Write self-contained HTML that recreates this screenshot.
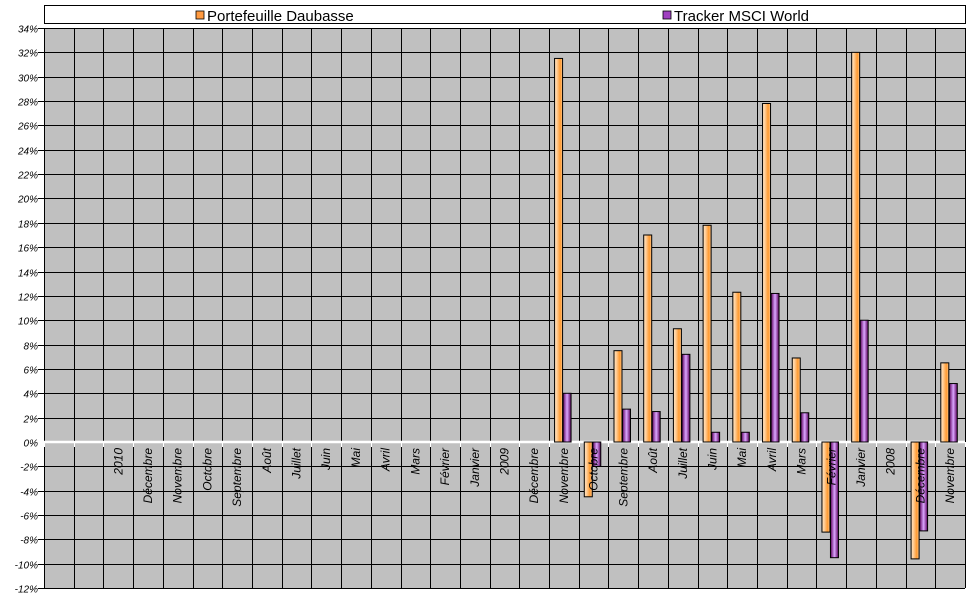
<!DOCTYPE html>
<html><head><meta charset="utf-8"><style>
html,body{margin:0;padding:0;background:#fff;}
svg{display:block;font-family:"Liberation Sans",sans-serif;}
</style></head><body>
<svg id="s" width="970" height="603" xmlns="http://www.w3.org/2000/svg">
<defs>
<linearGradient id="go" x1="0" x2="1" y1="0" y2="0">
<stop offset="0" stop-color="#ffe0bb"/><stop offset="0.25" stop-color="#ffd3a3"/><stop offset="0.7" stop-color="#ff9a30"/><stop offset="1" stop-color="#ffc890"/></linearGradient>
<linearGradient id="gp" x1="0" x2="1" y1="0" y2="0">
<stop offset="0" stop-color="#5a005a"/><stop offset="0.5" stop-color="#dba6ff"/><stop offset="1" stop-color="#5a005a"/></linearGradient>
</defs>
<rect x="44" y="28" width="921" height="560" fill="#c0c0c0"/>
<g id="grid" stroke="#000" stroke-width="1"></g>
<g id="bars"></g>
<g id="lab" font-size="11" font-style="italic" fill="#000"></g>
<rect x="44.5" y="5.5" width="921" height="18" fill="#fff" stroke="#000"/>
<rect x="196" y="11" width="8" height="8" fill="#ff9a40" stroke="#000" stroke-width="0.8"/>
<text x="207" y="21" font-size="15">Portefeuille Daubasse</text>
<rect x="663" y="11" width="8" height="8" fill="#a040c0" stroke="#000" stroke-width="0.8"/>
<text x="674" y="21" font-size="15">Tracker MSCI World</text>
</svg>
<script>
var NS="http://www.w3.org/2000/svg";
function el(p,t,a,txt){var e=document.createElementNS(NS,t);for(var k in a)e.setAttribute(k,a[k]);if(txt!==undefined)e.textContent=txt;document.getElementById(p).appendChild(e);return e;}
var ptop=28,step=24.353,x0=44,cw=29.71,zero=28+17*step;
for(var i=0;i<=23;i++){var y=Math.round(ptop+i*step)+0.5;
 if(i!=17)el("grid","line",{x1:38,x2:965,y1:y,y2:y});
 var v=34-2*i; el("lab","text",{x:38,y:y+4,"text-anchor":"end","font-size":"10"},v+"%");}
for(var j=0;j<=31;j++){var x=Math.round(x0+j*cw)+0.5;el("grid","line",{x1:x,x2:x,y1:28,y2:588});}
var names=["","","2010","Décembre","Novembre","Octobre","Septembre","Août","Juillet","Juin","Mai","Avril","Mars","Février","Janvier","2009","Décembre","Novembre","Octobre","Septembre","Août","Juillet","Juin","Mai","Avril","Mars","Février","Janvier","2008","Décembre","Novembre"];
var data={17:[31.5,4],18:[-4.5,-2],19:[7.5,2.7],20:[17,2.5],21:[9.3,7.2],22:[17.8,0.8],23:[12.3,0.8],24:[27.8,12.2],25:[6.9,2.4],26:[-7.4,-9.5],27:[32,10],29:[-9.6,-7.3],30:[6.5,4.8]};
function bar(x,v,f){var h=v*step/2;var y=v>0?zero-h:zero;el("bars","rect",{x:x+0.5,y:y,width:8,height:Math.abs(h),fill:f,stroke:"#000","stroke-width":1});}
for(var k in data){var cx=x0+k*cw;bar(cx+5,data[k][0],"url(#go)");bar(cx+13.5,data[k][1],"url(#gp)");}
el("grid","line",{x1:44,x2:965,y1:zero,y2:zero,stroke:"#fff","stroke-width":2.5});
for(var j=0;j<=31;j++){var x=Math.round(x0+j*cw)+0.5;el("grid","line",{x1:x,x2:x,y1:zero,y2:zero+5,stroke:"#fff"});}
for(var n=0;n<names.length;n++){if(!names[n])continue;var cx=x0+n*cw+cw/2+4;
 el("lab","text",{x:0,y:0,"text-anchor":"end",transform:"translate("+cx+","+(zero+6)+") rotate(-90)","font-size":"12"},names[n]);}
</script>
</body></html>
